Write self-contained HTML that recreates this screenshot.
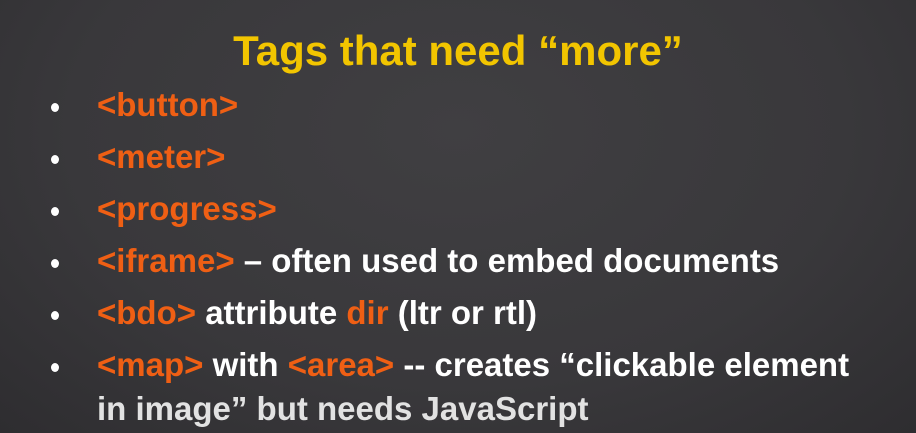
<!DOCTYPE html>
<html><head><meta charset="utf-8"><style>
html,body{margin:0;padding:0}
body{width:916px;height:433px;overflow:hidden;background:#3b3a3d;background:radial-gradient(ellipse at 50% 30%,#403f42 0%,#39383b 60%,#2e2d30 100%);font-family:"Liberation Sans",sans-serif;font-weight:bold;position:relative}
.t{position:absolute;left:0;width:916px;top:27px;text-align:center;color:#f2c500;font-size:42px;letter-spacing:0}
.l{position:absolute;left:97px;color:#fff;font-size:33px;letter-spacing:0;white-space:nowrap}
.o{color:#ef5f14}
.b{position:absolute;left:51px;width:8px;height:9px;border-radius:50%;background:#fff}
</style></head><body>
<div class="t">Tags that need “more”</div>
<div class="b" style="top:103px"></div><div class="l" style="top:86px"><span class="o">&lt;button&gt;</span></div>
<div class="b" style="top:155px"></div><div class="l" style="top:138px"><span class="o">&lt;meter&gt;</span></div>
<div class="b" style="top:207px"></div><div class="l" style="top:190px"><span class="o">&lt;progress&gt;</span></div>
<div class="b" style="top:259px"></div><div class="l" style="top:242px"><span class="o">&lt;iframe&gt;</span> – often used to embed documents</div>
<div class="b" style="top:311px"></div><div class="l" style="top:294px"><span class="o">&lt;bdo&gt;</span> attribute <span class="o">dir</span> (ltr or rtl)</div>
<div class="b" style="top:363px"></div><div class="l" style="top:346px"><span class="o">&lt;map&gt;</span> with <span class="o">&lt;area&gt;</span> -- creates “clickable element</div>
<div class="l" style="top:390px;color:#e2e2e2">in image” but needs JavaScript</div>
</body></html>
